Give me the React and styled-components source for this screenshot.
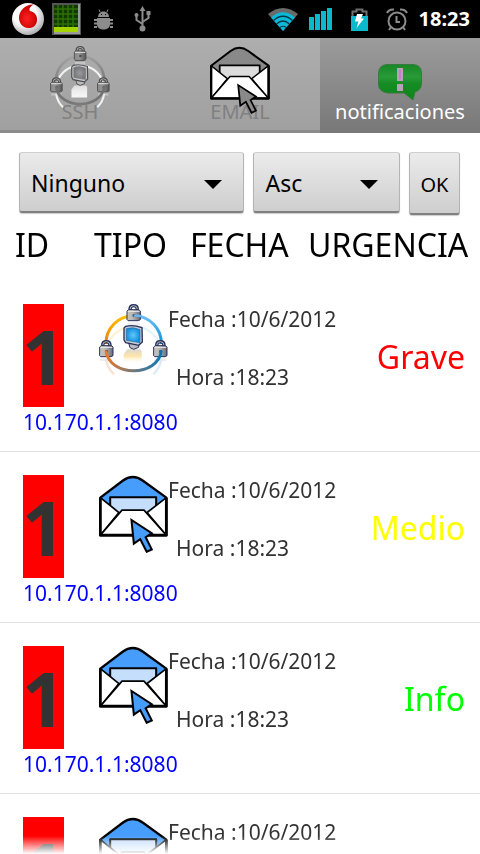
import React from "react";
import styled, { createGlobalStyle, css } from "styled-components";

const GlobalStyle = createGlobalStyle`
  *, *::before, *::after { box-sizing: border-box; }
  html, body { margin: 0; padding: 0; background: #fff; }
  body, button, select { font-family: "Noto Sans", "Open Sans", sans-serif; }
`;

const Screen = styled.div`
  display: flex;
  flex-direction: column;
  height: 100vh;
  overflow: hidden;
  background: #fff;
`;

/* ---------- status bar ---------- */

const StatusBar = styled.header`
  display: flex;
  justify-content: space-between;
  align-items: center;
  flex: none;
  height: 38px;
  padding: 0 10px 0 12px;
  background: #000;
`;

const StatusGroup = styled.div`
  display: flex;
  align-items: center;
  gap: ${(p) => p.$gap}px;
`;

const Clock = styled.time`
  color: #fff;
  font-size: 20px;
  font-weight: 700;
  line-height: 28px;
`;

/* ---------- tabs ---------- */

const Tabs = styled.nav`
  display: grid;
  grid-template-columns: repeat(3, 1fr);
  flex: none;
  height: 95px;
`;

const Tab = styled.button`
  display: grid;
  justify-items: center;
  padding: 8px 0;
  border: 0;
  border-bottom: 3px solid #8c8c8c;
  background: linear-gradient(#aeaeae, #a0a0a0) padding-box;
  color: #808080;
  font-size: 20px;
  line-height: 26px;

  ${(p) =>
    p.$active &&
    css`
      border-bottom-color: #797979;
      background: linear-gradient(#9c9c9c, #797979);
      color: #fff;
    `}
`;

const TabLabel = styled.span`
  grid-area: 1 / 1;
  align-self: end;
  margin-bottom: -3px;
`;

const TabIcon = styled.span`
  grid-area: 1 / 1;
  align-self: start;
  display: flex;
  width: 60px;

  svg { width: 100%; height: auto; }
`;

/* ---------- controls ---------- */

const Controls = styled.form`
  display: grid;
  grid-template-columns: 20fr 13fr 51px;
  align-items: start;
  gap: 9px;
  flex: none;
  padding: 19px 20px 7px 19px;
`;

const raised = css`
  width: 100%;
  border: 1px solid #b4b4b4;
  border-top-color: #cfcfcf;
  border-bottom: 2px solid #808080;
  border-radius: 3px;
  background: linear-gradient(#ebebeb, #cecece);
  box-shadow: 0 1px 1px #ccc;
  color: #000;
`;

const SelectBox = styled.label`
  display: grid;
  align-items: center;
`;

const Select = styled.select`
  ${raised}
  grid-area: 1 / 1;
  appearance: none;
  height: 61px;
  padding: 2px 48px 0 11px;
  font-size: 23px;
`;

const Arrow = styled.svg`
  grid-area: 1 / 1;
  justify-self: end;
  width: 18px;
  height: 9px;
  margin-right: 22px;
  margin-top: 4px;
  pointer-events: none;
`;

const OkButton = styled.button`
  ${raised}
  height: 63px;
  padding: 2px 0 0;
  font-size: 20px;
`;

/* ---------- notifications ---------- */

const ListArea = styled.main`
  flex: 1;
  min-height: 0;
  overflow: hidden;
  mask-image: linear-gradient(to top, transparent, #000 18px);
`;

const Table = styled.table`
  width: 100%;
  table-layout: fixed;
  border-collapse: separate;
  border-spacing: 0;
`;

const Column = styled.col`
  width: ${(p) => p.$width};
`;

const Heading = styled.th`
  height: 59px;
  padding: 1px ${(p) => p.$right || 0}px 0 ${(p) => p.$left || 0}px;
  color: #000;
  font-size: 32px;
  font-weight: 400;
  line-height: 44px;
  text-align: ${(p) => (p.$right ? "right" : "left")};
  vertical-align: top;
  white-space: nowrap;
`;

const Cell = styled.td`
  padding: ${(p) => p.$top || 23}px 0 0 ${(p) => p.$left || 0}px;
  vertical-align: top;
`;

const Badge = styled.div`
  display: flex;
  justify-content: center;
  align-items: center;
  width: 41px;
  height: 103px;
  padding-top: 2px;
  background: #f00;
  color: #323232;
  font-size: 75px;
  font-weight: 700;
  line-height: 101px;
`;

const RowIcon = styled.div`
  display: flex;
  width: 69px;

  svg { width: 100%; height: auto; }
`;

const Stamp = styled.div`
  color: #323232;
  font-size: 21px;
  line-height: 28px;
  white-space: nowrap;

  & + & {
    margin-top: 30px;
    padding-left: 8px;
  }
`;

const Urgency = styled.td`
  padding: 25px 15px 0 0;
  color: ${(p) => p.$color};
  font-size: 32px;
  line-height: 44px;
  text-align: right;
  vertical-align: middle;
`;

const LinkCell = styled.td`
  height: 45px;
  padding: 0 0 0 23px;
  border-bottom: 1px solid #e0e0e0;
  vertical-align: top;
`;

const HostLink = styled.a`
  color: #00f;
  font-size: 21px;
  line-height: 30px;
  text-decoration: none;
`;

/* ---------- status icons ---------- */

const CarrierIcon = () => (
  <svg width="32" height="32" viewBox="0 0 32 32">
    <defs>
      <radialGradient id="pearl" cx=".4" cy=".35" r=".7">
        <stop offset=".5" stopColor="#fff" />
        <stop offset="1" stopColor="#a2a2a8" />
      </radialGradient>
      <radialGradient id="drop" cx=".45" cy=".6" r=".6">
        <stop offset="0" stopColor="#ff2020" />
        <stop offset="1" stopColor="#c40000" />
      </radialGradient>
    </defs>
    <circle cx="16" cy="16" r="16" fill="url(#pearl)" />
    <path d="M22 1.500C17 3.500 17 7 18 8C23 9 25.500 13 25 17.500C24.500 23 20.500 25.500 16 25C10.500 24.500 7 20 7 15C7 8 13 1 22 1.500Z" fill="url(#drop)" />
  </svg>
);

const MeterIcon = () => (
  <svg width="29" height="32" viewBox="0 0 29 32">
    <rect width="29" height="32" fill="#555" />
    <path d="M27 1V30H2" fill="none" stroke="#999" strokeWidth="2" />
    <rect x="2" y="2" width="24" height="27" fill="#123a00" />
    <path d="M6 2V24M11 2V24M16 2V24M21 2V24M2 6H26M2 11H26M2 16H26M2 21H26" stroke="#2d7200" strokeWidth="1.500" />
    <rect x="2" y="24" width="24" height="5" fill="#a3d400" />
  </svg>
);

const DebugIcon = () => (
  <svg width="21" height="21" viewBox="0 0 21 21" fill="none" stroke="#8c8c8c">
    <path d="M5 8C5 0.500 16 0.500 16 8Z" fill="#8c8c8c" stroke="none" />
    <path d="M7 3L6 0.500M14 3L15 0.500" />
    <path d="M4 9H17V15C17 19 14 20.500 10.500 20.500S4 19 4 15Z" fill="#8c8c8c" stroke="none" />
    <path d="M4 11H1M4 14.500H1M4 18H1M17 11H20M17 14.500H20M17 18H20" strokeWidth="2" />
    <path d="M8 5.500H9M12 5.500H13" stroke="#000" />
  </svg>
);

const UsbIcon = () => (
  <svg width="17" height="26" viewBox="0 0 17 26" fill="none" stroke="#8c8c8c" strokeWidth="2">
    <path d="M8.500 21V3M8.500 18L2.500 14V9M8.500 16L14.500 12V8" />
    <path d="M5.500 5L8.500 0L11.500 5Z" fill="#8c8c8c" stroke="none" />
    <circle cx="8.500" cy="22.500" r="3" fill="#8c8c8c" stroke="none" />
    <circle cx="2.500" cy="9" r="2" fill="#8c8c8c" stroke="none" />
    <rect x="12.500" y="5" width="4" height="4" fill="#8c8c8c" stroke="none" />
  </svg>
);

const WifiIcon = () => (
  <svg width="30" height="23" viewBox="0 0 30 23">
    <path d="M0 6Q15 -6 30 6L15 23Z" fill="#6a6a6a" />
    <path d="M3 9.500Q15 -1 27 9.500L15 23Z" fill="#0cb8d8" />
    <path d="M5.500 12.500Q15 4 24.500 12.500M8.500 16Q15 10 21.500 16M12 19.500Q15 17 18 19.500" fill="none" stroke="#003642" strokeWidth="1.200" />
  </svg>
);

const SignalIcon = () => (
  <svg width="24" height="22" viewBox="0 0 24 22" fill="#0ab9cc">
    <rect y="9" width="5" height="13" />
    <rect x="6" y="6" width="5" height="16" />
    <rect x="12" y="3" width="5" height="19" />
    <rect x="18" y="0" width="5" height="22" />
  </svg>
);

const BatteryIcon = () => (
  <svg width="17" height="23" viewBox="0 0 17 23">
    <path d="M1.500 9V3.500H5.500V1.500H11.500V3.500H15.500V9" fill="none" stroke="#6e6e6e" strokeWidth="2" />
    <rect y="8" width="17" height="15" fill="#0ab9cc" />
    <path d="M6 6H12L10 10.500H13L5.500 20L7.500 13.500H4Z" fill="#fff" />
  </svg>
);

const AlarmIcon = () => (
  <svg width="22" height="23" viewBox="0 0 22 23" fill="none" stroke="#8c8c8c" strokeWidth="2">
    <circle cx="11" cy="13" r="8.500" />
    <path d="M1 5Q3 1 8 1.500M21 5Q19 1 14 1.500M10.500 8V14H14M5 19L3 22M17 19L19 22" />
  </svg>
);

/* ---------- tab and row icons ---------- */

const Envelope = ({ flap, letter, cursor }) => (
  <svg viewBox="57 45 204 232" stroke="#000" strokeWidth="7" strokeLinejoin="round" aria-hidden="true">
    <path d="M61 112L127 62Q157 40 187 62L256 112V223H61Z" fill={flap} />
    <path d="M90 111H226V160H90Z" fill={letter} strokeWidth="6" />
    <path d="M61 112L116 156L61 223Z" fill="#fff" strokeWidth="5" />
    <path d="M256 112L199 156L256 223Z" fill="#fff" strokeWidth="5" />
    <path d="M61 223L125 149H190L256 223Z" fill="#fff" strokeWidth="5" />
    <path d="M61 112V223H256V112" fill="none" strokeWidth="8" />
    <path d="M153 178L160 248L179 235L198 272L213 265L195 229L213 217Z" fill={cursor} strokeWidth="6" strokeLinejoin="miter" />
  </svg>
);

const Padlock = ({ x, y, body, edge }) => (
  <g transform={`translate(${x} ${y})`}>
    <path d="M-11 -8V-14Q-11 -25 0 -25T11 -14V-8" fill="none" stroke={edge} strokeWidth="10" />
    <path d="M-11 -8V-14Q-11 -25 0 -25T11 -14V-8" fill="none" stroke="#bbb" strokeWidth="3" />
    <path d="M-20 -9L-15 -13H15L20 -9V17L14 20H-17L-20 17Z" fill={`url(#${body})`} stroke={edge} strokeWidth="3" />
    <path d="M-18 -8H18" stroke="#eee" strokeWidth="3" />
    <rect x="-3" y="1" width="8" height="7" fill={edge} />
    <path d="M-18 25H18V33H-18Z" fill="#ddd" opacity=".5" />
  </g>
);

const Network = ({ id, mono }) => {
  const edge = mono ? "#4c4c4c" : "#27305c";
  const body = `${id}-metal`;
  return (
    <svg viewBox="58 40 207 220" fill="none" aria-hidden="true">
      <defs>
        <linearGradient id={body}>
          <stop offset="0" stopColor={mono ? "#888" : "#c9c5bd"} />
          <stop offset=".4" stopColor={mono ? "#969696" : "#b9b9b9"} />
          <stop offset="1" stopColor={mono ? "#555" : "#686b78"} />
        </linearGradient>
        <linearGradient id={`${id}-warm`} x1="0" y1="0" x2="0" y2="1">
          <stop offset="0" stopColor={mono ? "#a3a3a3" : "#ffc100"} />
          <stop offset="1" stopColor={mono ? "#828282" : "#f07a18"} />
        </linearGradient>
        <linearGradient id={`${id}-cool`} x1="0" y1="0" x2="0" y2="1">
          <stop offset="0" stopColor={mono ? "#a0a0a0" : "#6fc0f4"} />
          <stop offset="1" stopColor={mono ? "#777" : "#0c90d8"} />
        </linearGradient>
        <linearGradient id={`${id}-base`}>
          <stop offset="0" stopColor={mono ? "#727272" : "#e87a28"} />
          <stop offset=".5" stopColor={mono ? "#7b7b7b" : "#75787c"} />
          <stop offset="1" stopColor={mono ? "#717171" : "#0878b8"} />
        </linearGradient>
        <radialGradient id={`${id}-glass`}>
          <stop offset="0" stopColor={mono ? "#9a9a9a" : "#62c8fa"} />
          <stop offset="1" stopColor={mono ? "#777" : "#1590dc"} />
        </radialGradient>
        <linearGradient id={`${id}-glow`} x1="0" y1="0" x2="0" y2="1">
          <stop offset="0" stopColor={mono ? "#ddd" : "#ddd8d0"} />
          <stop offset=".5" stopColor={mono ? "#eee" : "#ffe6a8"} />
          <stop offset="1" stopColor="#fff" stopOpacity={mono ? ".9" : "0"} />
        </linearGradient>
      </defs>
      <path d="M79 188A83 83 0 0 1 162 107" stroke={mono ? "#f2f2f2" : "#fff3d6"} strokeWidth="7" />
      <path d="M162 107A83 83 0 0 1 245 188" stroke={mono ? "#f2f2f2" : "#e6f3fc"} strokeWidth="7" />
      <path d="M79 205Q83 232 103 251" stroke={mono ? "#f2f2f2" : "#fbe3d3"} strokeWidth="7" />
      <path d="M245 205Q241 232 221 251" stroke={mono ? "#f2f2f2" : "#dcecf7"} strokeWidth="7" />
      <path d="M139 181L143 176H181L186 181V218H132V190Z" fill={`url(#${id}-glow)`} />
      <path d="M79 160A83 83 0 0 1 162 75" stroke={`url(#${id}-warm)`} strokeWidth="9" />
      <path d="M162 75A83 83 0 0 1 245 160" stroke={`url(#${id}-cool)`} strokeWidth="9" />
      <path d="M147 157L151 171L162 176L177 170L178 157Z" fill="#bbb" stroke={edge} strokeWidth="3" />
      <path d="M138 107Q160 101 187 111L188 154L177 164L138 156L133 148V112Z" fill="#c5cbd4" stroke={edge} strokeWidth="4" />
      <path d="M140 114Q160 107 181 117V156L140 149Z" fill={`url(#${id}-glass)`} stroke={mono ? "#777" : "#246ba3"} strokeWidth="2" />
      <Padlock x={162} y={70} body={body} edge={edge} />
      <Padlock x={80} y={178} body={body} edge={edge} />
      <Padlock x={242} y={178} body={body} edge={edge} />
      {!mono && <path d="M162 75Q178 74 190 79" stroke="#66b8f0" strokeWidth="7" />}
      <path d="M79 180C88 260 236 260 245 180" stroke={`url(#${id}-base)`} strokeWidth="9" />
    </svg>
  );
};

const AlertBubble = () => (
  <svg viewBox="0 0 60 60" aria-hidden="true">
    <defs>
      <linearGradient id="bubble" x1="0" y1="0" x2="0" y2="1">
        <stop offset="0" stopColor="#188626" />
        <stop offset=".35" stopColor="#289b37" />
        <stop offset=".55" stopColor="#168b24" />
        <stop offset="1" stopColor="#0b861b" />
      </linearGradient>
    </defs>
    <path d="M17 18.500H43Q51.500 19 51.500 27V37Q51.500 44 45 46L43 54L34 47H18Q8.500 46 8.500 38V28Q8.500 19 17 18.500Z" fill="url(#bubble)" stroke="#397a40" />
    <path d="M27 22H33V35H27ZM27 38H33V45H27Z" fill="#b6a3b8" />
    <path d="M30 24V33" stroke="#ca7cd0" strokeWidth="2" />
  </svg>
);

const MailIcon = () => <Envelope flap="#469dfb" letter="#c5defb" cursor="#469dfb" />;

/* ---------- data ---------- */

const notifications = [
  { kind: "ssh", label: "Grave", color: "#f00" },
  { kind: "email", label: "Medio", color: "#ff0" },
  { kind: "email", label: "Info", color: "#0f0" },
  { kind: "email", label: "Info", color: "#0f0" },
];

const Dropdown = ({ name, label, options }) => (
  <SelectBox>
    <Select name={name} aria-label={label}>
      {options.map((o) => (
        <option key={o}>{o}</option>
      ))}
    </Select>
    <Arrow viewBox="0 0 18 9" aria-hidden="true">
      <path d="M0 0H18L9 9Z" />
    </Arrow>
  </SelectBox>
);

const Notification = ({ kind, label, color, index }) => (
  <tbody>
    <tr>
      <Cell $left={23}>
        <Badge>1</Badge>
      </Cell>
      <Cell $left={20}>
        <RowIcon>{kind === "ssh" ? <Network id={`net${index}`} /> : <MailIcon />}</RowIcon>
      </Cell>
      <Cell $top={24}>
        <Stamp>Fecha :10/6/2012</Stamp>
        <Stamp>Hora :18:23</Stamp>
      </Cell>
      <Urgency $color={color}>{label}</Urgency>
    </tr>
    <tr>
      <LinkCell colSpan={4}>
        <HostLink href="http://10.170.1.1:8080">10.170.1.1:8080</HostLink>
      </LinkCell>
    </tr>
  </tbody>
);

export default function App() {
  return (
    <Screen>
      <GlobalStyle />
      <StatusBar>
        <StatusGroup $gap={12}>
          <StatusGroup $gap={8}>
            <CarrierIcon />
            <MeterIcon />
          </StatusGroup>
          <StatusGroup $gap={20}>
            <DebugIcon />
            <UsbIcon />
          </StatusGroup>
        </StatusGroup>
        <StatusGroup $gap={11}>
          <StatusGroup $gap={18}>
            <StatusGroup $gap={11}>
              <WifiIcon />
              <SignalIcon />
            </StatusGroup>
            <BatteryIcon />
            <AlarmIcon />
          </StatusGroup>
          <Clock>18:23</Clock>
        </StatusGroup>
      </StatusBar>

      <Tabs>
        <Tab type="button">
          <TabLabel>SSH</TabLabel>
          <TabIcon>
            <Network id="tab" mono />
          </TabIcon>
        </Tab>
        <Tab type="button">
          <TabLabel>EMAIL</TabLabel>
          <TabIcon>
            <Envelope flap="#898989" letter="#dcdcdc" cursor="#898989" />
          </TabIcon>
        </Tab>
        <Tab type="button" $active aria-current="page">
          <TabLabel>notificaciones</TabLabel>
          <TabIcon>
            <AlertBubble />
          </TabIcon>
        </Tab>
      </Tabs>

      <Controls onSubmit={(e) => e.preventDefault()}>
        <Dropdown name="filter" label="Filtro" options={["Ninguno", "ID", "Tipo", "Fecha", "Urgencia"]} />
        <Dropdown name="order" label="Orden" options={["Asc", "Desc"]} />
        <OkButton type="submit">OK</OkButton>
      </Controls>

      <ListArea>
        <Table>
          <colgroup>
            <Column $width="79px" />
            <Column $width="89px" />
            <Column $width="auto" />
            <Column $width="172px" />
          </colgroup>
          <thead>
            <tr>
              <Heading $left={15}>ID</Heading>
              <Heading $left={15}>TIPO</Heading>
              <Heading $left={22}>FECHA</Heading>
              <Heading $right={13}>URGENCIA</Heading>
            </tr>
          </thead>
          {notifications.map((n, i) => (
            <Notification key={i} index={i} {...n} />
          ))}
        </Table>
      </ListArea>
    </Screen>
  );
}
